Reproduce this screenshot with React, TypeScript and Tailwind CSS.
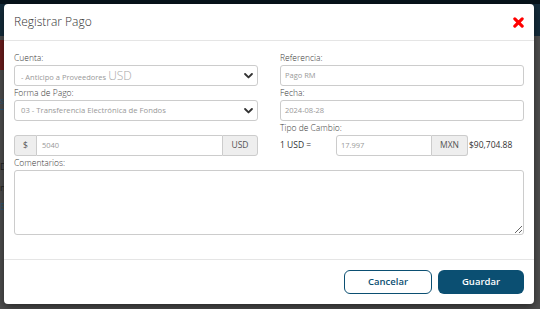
import React from "react";

function Chevron() {
  return (
    <svg width="9" height="6" viewBox="0 0 10 7" className="shrink-0">
      <path d="M1 1.2 L5 5.2 L9 1.2" fill="none" stroke="#333" strokeWidth="2.2" strokeLinecap="round" strokeLinejoin="round" />
    </svg>
  );
}

function CloseX() {
  return (
    <svg width="11" height="11" viewBox="0 0 12 12">
      <path d="M2 2 L10 10 M10 2 L2 10" stroke="#ff0000" strokeWidth="3.4" strokeLinecap="round" />
    </svg>
  );
}

function Label({ children }: { children?: React.ReactNode }) {
  return <div className="h-[14px] flex items-center text-[8.5px] text-[#3a3a3a] font-light leading-none">{children}</div>;
}

const box = "h-[21px] border border-[#ccc] rounded-[3px] bg-white flex items-center";

export default function App() {
  return (
    <div className="relative w-[540px] h-[309px] overflow-hidden bg-[#4e4e4e] font-['Open_Sans',sans-serif]">
      {/* dimmed page behind */}
      <div className="h-[36px] bg-[#142c3b]" />
      <div className="h-[30px] w-[40px] mt-[4px] bg-[#6d1c1c]" />
      <div className="mt-[26px] text-[9px] text-[#2d5a78] leading-none">s</div>
      <div className="mt-[4px] w-[10px] h-px bg-[#2d5a78]" />
      <div className="mt-[52px] text-[9px] text-[#222] leading-none">D</div>
      <div className="mt-[12px] text-[9px] text-[#222] leading-none">n</div>
      <div className="mt-[10px] text-[9px] text-[#2d5a78] leading-none">E</div>
      <div className="absolute top-0 left-0 right-0 h-[4px] bg-[#07131b]" />

      {/* modal */}
      <div className="absolute left-[4px] top-[4px] w-[530px] h-[300px] bg-white rounded-[4px] shadow-[0_3px_9px_rgba(0,0,0,0.5)] flex flex-col">
        <div className="h-[37px] px-[10px] flex items-center justify-between border-b border-[#e5e5e5]">
          <span className="text-[12px] font-light text-[#333]">Registrar Pago</span>
          <CloseX />
        </div>

        <div className="px-[10px] pt-[10px] pb-[24px] border-b border-[#e5e5e5]">
          <div className="grid grid-cols-2 gap-x-[22px]">
            <div>
              <Label>Cuenta:</Label>
              <div className={`${box} pl-[6px] pr-[4px] justify-between`}>
                <span className="flex items-baseline text-[#a8a8a8]">
                  <span className="text-[7.5px] text-[#999]">- Anticipo a Proveedores</span>
                  <span className="text-[12px] font-light ml-[2px]">USD</span>
                </span>
                <Chevron />
              </div>
            </div>
            <div>
              <Label>Referencia:</Label>
              <div className={`${box} px-[4px] text-[7.5px] text-[#999]`}>Pago RM</div>
            </div>

            <div>
              <Label>Forma de Pago:</Label>
              <div className={`${box} pl-[6px] pr-[4px] justify-between`}>
                <span className="text-[7.7px] text-[#999]">03 - Transferencia Electrónica de Fondos</span>
                <Chevron />
              </div>
            </div>
            <div>
              <Label>Fecha:</Label>
              <div className={`${box} px-[4px] text-[7.5px] text-[#999]`}>2024-08-28</div>
            </div>

            <div>
              <Label />
              <div className="h-[21px] flex text-[8.5px]">
                <div className="w-[23px] border border-[#ccc] rounded-l-[3px] bg-[#eee] flex items-center justify-center text-[#555]">$</div>
                <div className="flex-1 border-y border-[#ccc] flex items-center px-[5px] text-[7.5px] text-[#999]">5040</div>
                <div className="w-[36px] border border-[#ccc] rounded-r-[3px] bg-[#eee] flex items-center justify-center text-[#555]">USD</div>
              </div>
            </div>
            <div>
              <Label>Tipo de Cambio:</Label>
              <div className="h-[21px] flex items-center text-[8.5px] text-[#333]">
                <span className="w-[56px]">1 USD =</span>
                <div className="w-[96px] h-full border border-[#ccc] rounded-l-[3px] flex items-center px-[4px] text-[7.5px] text-[#999]">17.997</div>
                <div className="w-[36px] h-full border-y border-r border-[#ccc] rounded-r-[3px] bg-[#eee] flex items-center justify-center text-[#555]">MXN</div>
                <span className="ml-[1px]">$90,704.88</span>
              </div>
            </div>
          </div>

          <Label>Comentarios:</Label>
          <textarea className="block w-full h-[65px] border border-[#ccc] rounded-[3px] outline-none" />
        </div>

        <div className="flex-1 flex items-center justify-end gap-[6px] px-[10px]">
          <button className="w-[88px] h-[24px] rounded-[6px] border border-[#0b4f72] bg-white text-[#0b4f72] text-[9.5px] font-semibold">
            Cancelar
          </button>
          <button className="w-[86px] h-[24px] rounded-[6px] bg-[#0b4f72] text-white text-[9.5px] font-semibold">
            Guardar
          </button>
        </div>
      </div>
    </div>
  );
}
